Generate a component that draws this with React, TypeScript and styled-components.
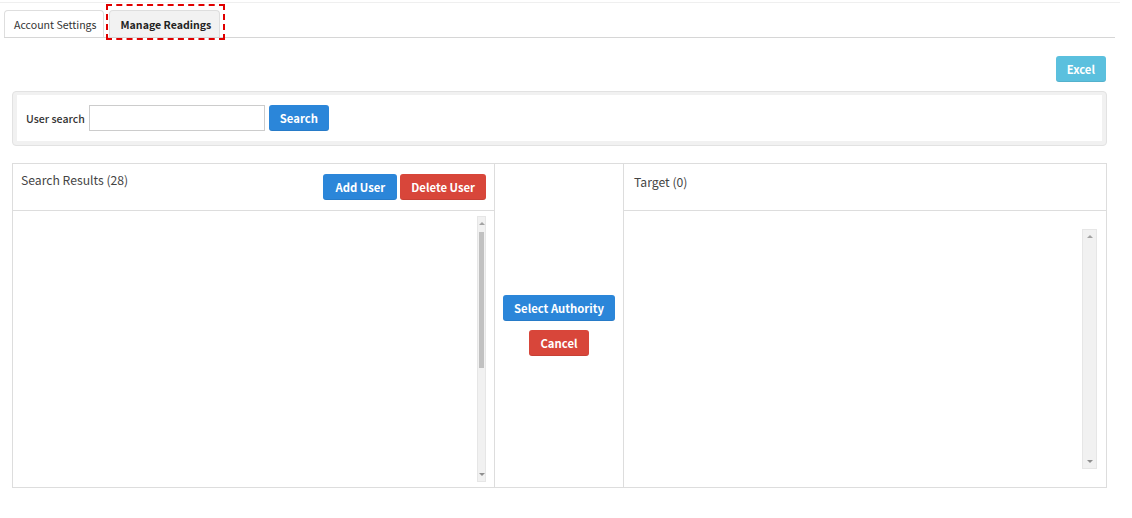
import React from "react";
import styled, { createGlobalStyle } from "styled-components";

const GlobalStyle = createGlobalStyle`
  html, body {
    margin: 0;
    padding: 0;
    background: #fff;
  }
  body {
    font-family: "Noto Sans CJK KR", "Noto Sans", "Liberation Sans", sans-serif;
    font-size: 12px;
    color: #333;
  }
  * { box-sizing: border-box; }
`;

const Page = styled.div`
  width: 1132px;
  padding: 2px 25px 0 12px;
`;

const TopLine = styled.div`
  height: 1px;
  background: #efefef;
  margin: 0 -13px 0 -12px;
`;

const TabBar = styled.div`
  display: flex;
  align-items: flex-end;
  gap: 5px;
  height: 35px;
  margin: 0 -8px 0 -8px;
  border-bottom: 1px solid #d6d6d6;
`;

const Tab = styled.div<{ $marked?: boolean }>`
  position: relative;
  height: 27px;
  padding: ${(p) => (p.$marked ? "0 8px 0 11px" : "0 6px 0 9px")};
  display: flex;
  align-items: center;
  border: 1px solid #dedede;
  border-bottom: none;
  border-radius: 4px 4px 0 0;
  background: ${(p) => (p.$marked ? "#f2f2f2" : "#fff")};
  font-size: 10.6px;
  font-weight: ${(p) => (p.$marked ? 700 : 400)};
  color: ${(p) => (p.$marked ? "#222" : "#333")};

  ${(p) =>
    p.$marked &&
    `
    &::after {
      content: "";
      position: absolute;
      left: -4px;
      right: -6px;
      top: -7px;
      bottom: -3px;
      border: 2px dashed #e00000;
    }
  `}
`;

const ToolRow = styled.div`
  display: flex;
  justify-content: flex-end;
  margin-top: 18px;
  padding-right: 1px;
`;

const Btn = styled.button<{ $tone: "blue" | "red" | "sky"; $wide?: boolean }>`
  height: 26px;
  padding: 0 ${(p) => (p.$wide ? 12 : 11)}px;
  border: none;
  border-radius: 3px;
  font-family: inherit;
  font-size: 11.3px;
  font-weight: 700;
  color: #fff;
  cursor: pointer;
  background: ${(p) =>
    p.$tone === "blue" ? "#2b86d9" : p.$tone === "red" ? "#d8463a" : "#5bc0de"};
  box-shadow: inset 0 -1px 0 rgba(0, 0, 0, 0.08);
`;

const SearchBox = styled.div`
  margin-top: 9px;
  background: #f1f1f1;
  border: 1px solid #e2e2e2;
  border-radius: 4px;
  padding: 3px 4px 4px;
`;

const SearchInner = styled.div`
  background: #fff;
  height: 46px;
  display: flex;
  align-items: center;
  padding-left: 9px;
  gap: 4px;
`;

const Label = styled.label`
  font-size: 10.6px;
  font-weight: 500;
  color: #333;
`;

const Input = styled.input`
  width: 176px;
  height: 26px;
  border: 1px solid #ccc;
  outline: none;
  padding: 0 6px;
  font-family: inherit;
`;

const Panels = styled.div`
  margin-top: 17px;
  height: 325px;
  border: 1px solid #ddd;
  display: grid;
  grid-template-columns: 481px 130px 1fr;
`;

const Column = styled.div`
  display: flex;
  flex-direction: column;
  min-width: 0;
`;

const Header = styled.div<{ $left: number }>`
  height: 47px;
  border-bottom: 1px solid #ddd;
  display: flex;
  justify-content: space-between;
  align-items: flex-start;
  padding: 10px 8px 0 ${(p) => p.$left}px;
`;

const Title = styled.div<{ $offset: number }>`
  font-size: 12.2px;
  color: #444;
  margin-top: ${(p) => p.$offset}px;
`;

const BtnGroup = styled.div`
  display: flex;
  gap: 3px;
`;

const Body = styled.div<{ $pad: string }>`
  flex: 1;
  display: flex;
  justify-content: flex-end;
  padding: ${(p) => p.$pad};
`;

const Track = styled.div<{ $w: number }>`
  width: ${(p) => p.$w}px;
  background: #f1f1f1;
  border: 1px solid #e6e6e6;
  display: flex;
  flex-direction: column;
  align-items: center;
  justify-content: space-between;
  position: relative;
`;

const Arrow = styled.div<{ $up?: boolean }>`
  width: 0;
  height: 0;
  margin: 5px 0;
  border-left: 3px solid transparent;
  border-right: 3px solid transparent;
  ${(p) => (p.$up ? "border-bottom: 3px solid #a3a3a3;" : "border-top: 3px solid #8f8f8f;")}
`;

const Thumb = styled.div`
  position: absolute;
  left: 1px;
  right: 1px;
  top: 15px;
  height: 136px;
  background: #c1c1c1;
`;

const Middle = styled.div`
  display: flex;
  flex-direction: column;
  align-items: center;
  justify-content: center;
  gap: 9px;
  border-left: 1px solid #ddd;
  border-right: 1px solid #ddd;
  padding-bottom: 1px;
`;

export default function App() {
  return (
    <>
      <GlobalStyle />
      <Page>
        <TopLine />
        <TabBar>
          <Tab>Account Settings</Tab>
          <Tab $marked>Manage Readings</Tab>
        </TabBar>

        <ToolRow>
          <Btn $tone="sky">Excel</Btn>
        </ToolRow>

        <SearchBox>
          <SearchInner>
            <Label>User search</Label>
            <Input type="text" />
            <Btn $tone="blue">Search</Btn>
          </SearchInner>
        </SearchBox>

        <Panels>
          <Column>
            <Header $left={8}>
              <Title $offset={-3}>Search Results (28)</Title>
              <BtnGroup>
                <Btn $tone="blue" $wide>Add User</Btn>
                <Btn $tone="red">Delete User</Btn>
              </BtnGroup>
            </Header>
            <Body $pad="5px 8px 5px 0">
              <Track $w={9}>
                <Arrow $up />
                <Thumb />
                <Arrow />
              </Track>
            </Body>
          </Column>

          <Middle>
            <Btn $tone="blue">Select Authority</Btn>
            <Btn $tone="red">Cancel</Btn>
          </Middle>

          <Column>
            <Header $left={10}>
              <Title $offset={-1}>Target (0)</Title>
            </Header>
            <Body $pad="18px 9px 18px 0">
              <Track $w={15}>
                <Arrow $up />
                <Arrow />
              </Track>
            </Body>
          </Column>
        </Panels>
      </Page>
    </>
  );
}
